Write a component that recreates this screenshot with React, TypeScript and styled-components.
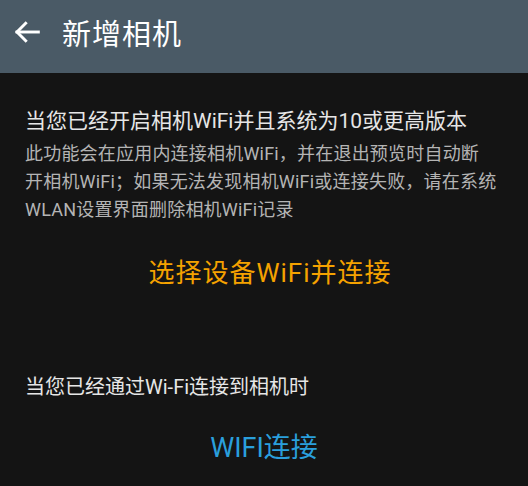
import React from "react";
import styled, { createGlobalStyle } from "styled-components";

const GlobalStyle = createGlobalStyle`
  html, body {
    margin: 0;
    padding: 0;
    background: #141414;
  }
  body {
    font-family: Roboto, "Noto Sans CJK SC", sans-serif;
  }
`;

const Page = styled.div`
  width: 528px;
  height: 486px;
  background: #141414;
  display: flex;
  flex-direction: column;
  overflow: hidden;
`;

const AppBar = styled.header`
  height: 73px;
  background: #4a5a66;
  display: flex;
  align-items: center;
  padding: 0 0 0 11px;
  box-sizing: border-box;
`;

const BackButton = styled.button`
  width: 32px;
  height: 32px;
  padding: 0;
  border: none;
  background: transparent;
  color: #ffffff;
  display: flex;
  align-items: center;
  justify-content: center;
  margin-right: 19px;
  margin-top: -10px;
`;

const Title = styled.h1`
  margin: -10px 0 0;
  font-size: 29px;
  font-weight: 400;
  color: #ffffff;
  letter-spacing: 1px;
`;

const Content = styled.main`
  padding: 33px 25px 0;
  display: flex;
  flex-direction: column;
`;

const Heading = styled.div<{ $size: number }>`
  font-size: ${({ $size }) => $size}px;
  line-height: 30px;
  color: #e6e6e6;
  white-space: nowrap;
`;

const Description = styled.p`
  margin: 4px 0 0;
  font-size: 18px;
  line-height: 28px;
  letter-spacing: 0.2px;
  color: #b4b4b4;
  white-space: nowrap;
`;

const ActionLink = styled.button<{ $color: string; $size: number; $offset?: number }>`
  align-self: center;
  height: 48px;
  padding: 0;
  margin-left: ${({ $offset = 0 }) => $offset}px;
  border: none;
  background: transparent;
  font-family: inherit;
  font-size: ${({ $size }) => $size}px;
  letter-spacing: ${({ $offset = 0 }) => ($offset ? 1 : 0)}px;
  color: ${({ $color }) => $color};
  white-space: nowrap;
`;

const Section = styled.section<{ $gap: number }>`
  margin-top: ${({ $gap }) => $gap}px;
  display: flex;
  flex-direction: column;
`;

const ArrowLeft = () => (
  <svg width="32" height="32" viewBox="0 0 24 24" fill="none" stroke="currentColor" strokeWidth="2.2" strokeLinecap="square">
    <path d="M20.5 12H4.5" />
    <path d="M11 5.5L4.5 12l6.5 6.5" />
  </svg>
);

export default function App() {
  return (
    <Page>
      <GlobalStyle />
      <AppBar>
        <BackButton aria-label="back">
          <ArrowLeft />
        </BackButton>
        <Title>新增相机</Title>
      </AppBar>
      <Content>
        <Heading $size={21}>当您已经开启相机WiFi并且系统为10或更高版本</Heading>
        <Description>
          此功能会在应用内连接相机WiFi，并在退出预览时自动断
          <br />
          开相机WiFi；如果无法发现相机WiFi或连接失败，请在系统
          <br />
          WLAN设置界面删除相机WiFi记录
        </Description>
        <Section $gap={22}>
          <ActionLink $color="#f5a200" $size={26} $offset={12}>选择设备WiFi并连接</ActionLink>
        </Section>
        <Section $gap={78}>
          <Heading $size={20}>当您已经通过Wi-Fi连接到相机时</Heading>
          <Section $gap={19}>
            <ActionLink $color="#2a9fdc" $size={27}>WIFI连接</ActionLink>
          </Section>
        </Section>
      </Content>
    </Page>
  );
}
